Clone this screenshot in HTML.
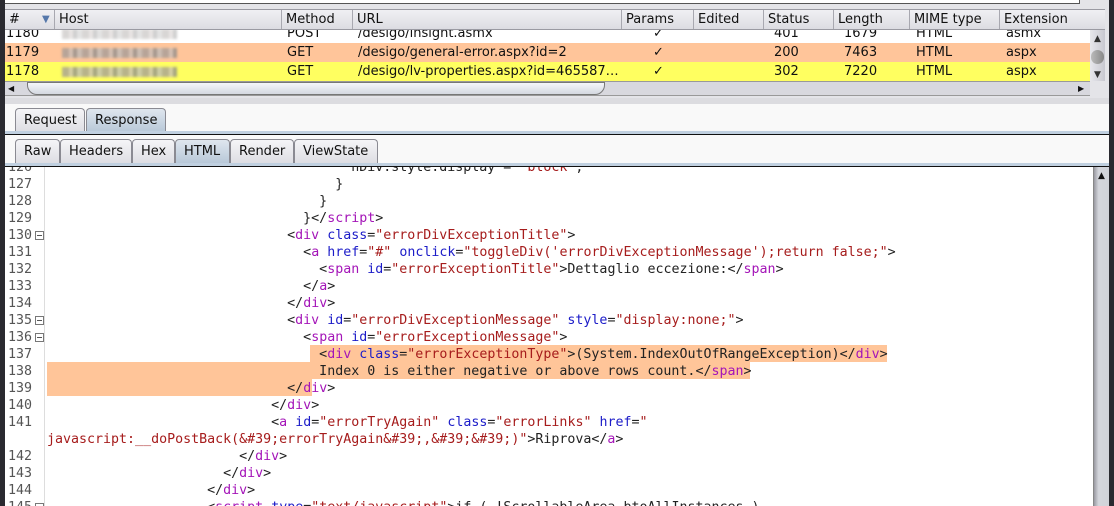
<!DOCTYPE html>
<html><head><meta charset="utf-8"><style>
*{margin:0;padding:0;box-sizing:border-box}
body{width:1114px;height:506px;overflow:hidden;background:#f9f9f9;position:relative;font-family:"DejaVu Sans","Liberation Sans",sans-serif;font-size:13px;color:#111}
.abs{position:absolute}
.hd{top:9px;height:21px;background:linear-gradient(#f0f0f3,#dcdce2);border-top:1px solid #9a9aa2;border-bottom:1px solid #9a9aa2}
.hc{position:absolute;top:0;height:19px;line-height:20px;padding-left:4px;border-right:1px solid #a8a8b0}
.row{position:absolute;left:5px;width:1085px;height:19px;line-height:20px}
.row span{position:absolute;top:0}
.blur{position:absolute;top:5px;height:10px;width:115px;left:57px;background:repeating-linear-gradient(90deg,#a09a98 0 7px,#c8c0bc 7px 11px,#888 11px 15px,#bbb 15px 20px);filter:blur(1.2px);opacity:.75}
.tab{position:absolute;height:24px;line-height:24px;padding:0 8px;border:1px solid #8a8a92;border-bottom:none;border-radius:4px 4px 0 0;background:linear-gradient(#f5f5f7,#dedee3);font-size:13px}
.tab.sel{background:linear-gradient(#dfe6ee,#b8c8d8)}
.code{position:absolute;left:5px;top:167px;width:1088px;height:339px;background:#fff;font-family:"DejaVu Sans Mono","Liberation Mono",monospace;font-size:13.3px;overflow:hidden}
.ln{position:absolute;left:0;width:40px;padding-left:3px;color:#555;height:17px;line-height:17px}
.ln i{position:absolute;left:30px;top:4px;width:9px;height:9px;border:1px solid #777;font-style:normal}
.ln i:after{content:"";position:absolute;left:1px;top:3px;width:5px;height:1px;background:#555}
.cl{position:absolute;left:42px;height:17px;line-height:17px;white-space:pre;color:#222}
.t{color:#a415b8}.a{color:#1c1cc8}.v{color:#a61c1c}
.hl{position:absolute;background:#ffc599;height:17px}
</style></head><body>
<div class="abs" style="left:0;top:0;width:5px;height:506px;background:#2a2a30"></div>
<div class="abs" style="left:1109px;top:0;width:5px;height:506px;background:#2a2a30"></div>
<div class="abs" style="left:5px;top:0;width:1104px;height:98px;background:#e4e4e8"></div>
<div class="abs" style="left:5px;top:0;width:1075px;height:4px;background:#fff;border-bottom:1px solid #555;border-right:1px solid #555"></div>
<div class="abs hd" style="left:5px;width:1100px">
<div class="hc" style="left:0;width:50px">#<span style="position:absolute;left:37px;color:#5577aa;font-size:10px">▼</span></div>
<div class="hc" style="left:50px;width:227px">Host</div>
<div class="hc" style="left:277px;width:71px">Method</div>
<div class="hc" style="left:348px;width:269px">URL</div>
<div class="hc" style="left:617px;width:72px">Params</div>
<div class="hc" style="left:689px;width:70px">Edited</div>
<div class="hc" style="left:759px;width:70px">Status</div>
<div class="hc" style="left:829px;width:76px">Length</div>
<div class="hc" style="left:905px;width:90px">MIME type</div>
<div class="hc" style="left:995px;width:105px;border-right:none">Extension</div>
</div>
<div class="abs" style="left:5px;top:30px;width:1085px;height:51px;background:#fff;overflow:hidden">
<div class="row" style="left:0;top:-6px;background:#fff"><span style="left:1px">1180</span><div class="blur" style="opacity:.4"></div><span style="left:282px">POST</span><span style="left:353px">/desigo/insight.asmx</span><span style="left:648px">✓</span><span style="left:769px">401</span><span style="left:839px">1679</span><span style="left:911px">HTML</span><span style="left:1001px">asmx</span></div>
<div class="row" style="left:0;top:13px;background:#ffc59a"><span style="left:1px">1179</span><div class="blur"></div><span style="left:282px">GET</span><span style="left:353px">/desigo/general-error.aspx?id=2</span><span style="left:648px">✓</span><span style="left:769px">200</span><span style="left:839px">7463</span><span style="left:911px">HTML</span><span style="left:1001px">aspx</span></div>
<div class="row" style="left:0;top:32px;background:#ffff60"><span style="left:1px">1178</span><div class="blur"></div><span style="left:282px">GET</span><span style="left:353px">/desigo/lv-properties.aspx?id=465587…</span><span style="left:648px">✓</span><span style="left:769px">302</span><span style="left:839px">7220</span><span style="left:911px">HTML</span><span style="left:1001px">aspx</span></div>
</div>
<div class="abs" style="left:1090px;top:30px;width:15px;height:51px;background:linear-gradient(90deg,#e8e8ec,#c8c8d0);font-size:9px;color:#333;text-align:center"><div style="margin-top:4px">▲</div><div style="margin:6px 1px;height:14px;border-radius:7px;background:linear-gradient(90deg,#bbb,#888)"></div><div>▼</div></div>
<div class="abs" style="left:5px;top:81px;width:1085px;height:15px;background:#d8d8de;border-top:1px solid #999;border-bottom:1px solid #999"><div style="position:absolute;left:22px;top:0;width:578px;height:13px;border:1px solid #777;border-radius:0 0 10px 10px;background:linear-gradient(#f4f6fa,#d4d8e0)"></div><span style="position:absolute;left:3px;top:0;font-size:8px;line-height:13px">◀</span><span style="position:absolute;left:1073px;top:0;font-size:8px;line-height:13px">▶</span></div>
<div class="abs" style="left:5px;top:98px;width:1104px;height:6px;background:#dcdce0"></div>
<div class="tab" style="left:15px;top:108px;width:70px">Request</div>
<div class="tab sel" style="left:86px;top:108px;width:80px">Response</div>
<div class="abs" style="left:5px;top:131px;width:1104px;height:4px;background:#c0d0e0;border-bottom:1px solid #111"></div>
<div class="tab" style="left:15px;top:139px;width:45px">Raw</div>
<div class="tab" style="left:60px;top:139px;width:72px">Headers</div>
<div class="tab" style="left:132px;top:139px;width:43px">Hex</div>
<div class="tab sel" style="left:175px;top:139px;width:55px">HTML</div>
<div class="tab" style="left:230px;top:139px;width:64px">Render</div>
<div class="tab" style="left:294px;top:139px;width:84px">ViewState</div>
<div class="abs" style="left:5px;top:163px;width:1104px;height:4px;background:#c0d0e0;border-bottom:1px solid #111"></div>
<div class="code">
<div class="abs" style="left:39px;top:0;width:1px;height:339px;background:#ddd"></div>
<div class="hl" style="left:305px;top:178px;width:577px"></div>
<div class="hl" style="left:42px;top:195px;width:703px"></div>
<div class="hl" style="left:42px;top:212px;width:265px"></div>
<div class="ln" style="top:-8px">126</div><div class="cl" style="top:-8px">                                      nDiv.style.display = <span class="v">"block"</span>;</div>
<div class="ln" style="top:9px">127</div><div class="cl" style="top:9px">                                    }</div>
<div class="ln" style="top:26px">128</div><div class="cl" style="top:26px">                                  }</div>
<div class="ln" style="top:43px">129</div><div class="cl" style="top:43px">                                }&lt;/<span class="t">script</span>&gt;</div>
<div class="ln" style="top:60px">130<i></i></div><div class="cl" style="top:60px">                              &lt;<span class="t">div</span> <span class="a">class</span>=<span class="v">"errorDivExceptionTitle"</span>&gt;</div>
<div class="ln" style="top:77px">131</div><div class="cl" style="top:77px">                                &lt;<span class="t">a</span> <span class="a">href</span>=<span class="v">"#"</span> <span class="a">onclick</span>=<span class="v">"toggleDiv('errorDivExceptionMessage');return false;"</span>&gt;</div>
<div class="ln" style="top:94px">132</div><div class="cl" style="top:94px">                                  &lt;<span class="t">span</span> <span class="a">id</span>=<span class="v">"errorExceptionTitle"</span>&gt;Dettaglio eccezione:&lt;/<span class="t">span</span>&gt;</div>
<div class="ln" style="top:111px">133</div><div class="cl" style="top:111px">                                &lt;/<span class="t">a</span>&gt;</div>
<div class="ln" style="top:128px">134</div><div class="cl" style="top:128px">                              &lt;/<span class="t">div</span>&gt;</div>
<div class="ln" style="top:145px">135<i></i></div><div class="cl" style="top:145px">                              &lt;<span class="t">div</span> <span class="a">id</span>=<span class="v">"errorDivExceptionMessage"</span> <span class="a">style</span>=<span class="v">"display:none;"</span>&gt;</div>
<div class="ln" style="top:162px">136<i></i></div><div class="cl" style="top:162px">                                &lt;<span class="t">span</span> <span class="a">id</span>=<span class="v">"errorExceptionMessage"</span>&gt;</div>
<div class="ln" style="top:179px">137</div><div class="cl" style="top:179px">                                  &lt;<span class="t">div</span> <span class="a">class</span>=<span class="v">"errorExceptionType"</span>&gt;(System.IndexOutOfRangeException)&lt;/<span class="t">div</span>&gt;</div>
<div class="ln" style="top:196px">138</div><div class="cl" style="top:196px">                                  Index 0 is either negative or above rows count.&lt;/<span class="t">span</span>&gt;</div>
<div class="ln" style="top:213px">139</div><div class="cl" style="top:213px">                              &lt;/<span class="t">div</span>&gt;</div>
<div class="ln" style="top:230px">140</div><div class="cl" style="top:230px">                            &lt;/<span class="t">div</span>&gt;</div>
<div class="ln" style="top:247px">141</div><div class="cl" style="top:247px">                            &lt;<span class="t">a</span> <span class="a">id</span>=<span class="v">"errorTryAgain"</span> <span class="a">class</span>=<span class="v">"errorLinks"</span> <span class="a">href</span>=<span class="v">"</span></div>
<div class="cl" style="top:264px"><span class="v">javascript:__doPostBack(&amp;#39;errorTryAgain&amp;#39;,&amp;#39;&amp;#39;)"</span>&gt;Riprova&lt;/<span class="t">a</span>&gt;</div>
<div class="ln" style="top:281px">142</div><div class="cl" style="top:281px">                        &lt;/<span class="t">div</span>&gt;</div>
<div class="ln" style="top:298px">143</div><div class="cl" style="top:298px">                      &lt;/<span class="t">div</span>&gt;</div>
<div class="ln" style="top:315px">144</div><div class="cl" style="top:315px">                    &lt;/<span class="t">div</span>&gt;</div>
<div class="ln" style="top:332px">145<i></i></div><div class="cl" style="top:332px">                    &lt;<span class="t">script</span> <span class="a">type</span>=<span class="v">"text/javascript"</span>&gt;if ( !ScrollableArea.btoAllInstances )</div>
</div>
<div class="abs" style="left:1093px;top:167px;width:16px;height:339px;background:linear-gradient(90deg,#9a9aa2,#d4d6dc 30%,#d0d2d8);border-left:1px solid #888"><div style="text-align:center;font-size:9px;margin-top:4px">▲</div></div>
</body></html>
